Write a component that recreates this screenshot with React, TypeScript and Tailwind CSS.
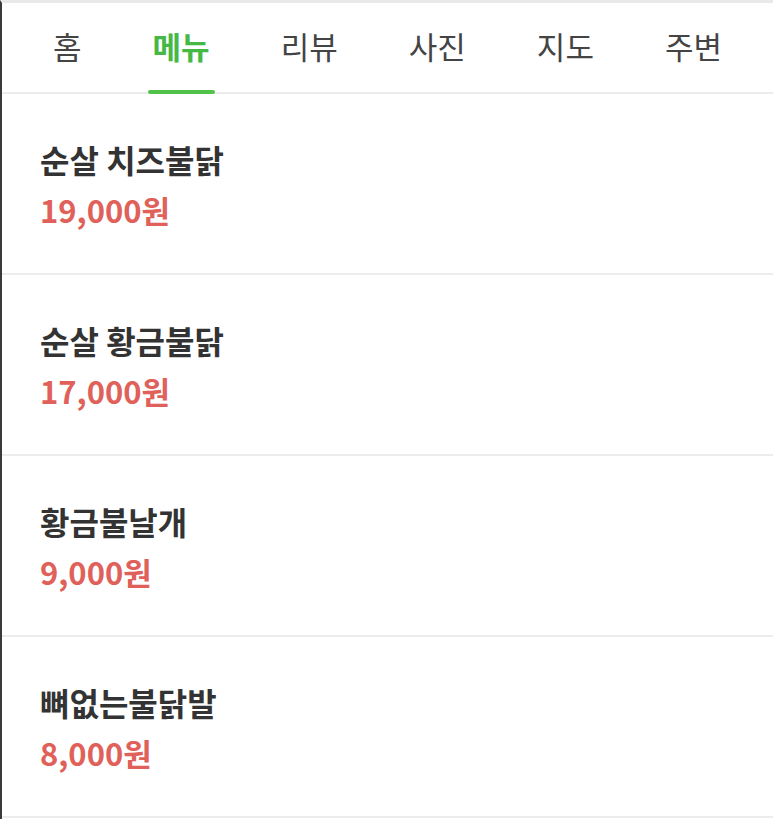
import { useState } from 'react';

const tabs = ['홈', '메뉴', '리뷰', '사진', '지도', '주변'];

const menu = [
  { name: '순살 치즈불닭', price: '19,000원' },
  { name: '순살 황금불닭', price: '17,000원' },
  { name: '황금불날개', price: '9,000원' },
  { name: '뼈없는불닭발', price: '8,000원' },
];

export default function App() {
  const [active, setActive] = useState(1);

  return (
    <div
      className="min-h-screen w-full border-l-2 border-t-[3px] border-l-[#3a3a3a] border-t-[#e9e9ec] bg-white"
      style={{ fontFamily: '"Noto Sans CJK KR", "Noto Sans", sans-serif' }}
    >
      <nav className="flex h-[91px] items-stretch justify-between border-b-2 border-[#ececec] px-[46px]">
        {tabs.map((tab, i) => (
          <button
            key={tab}
            onClick={() => setActive(i)}
            className={`relative flex items-center px-[5px] pb-[2px] text-[31px] ${
              i === active ? 'font-bold text-[#45b845]' : 'font-normal text-[#444]'
            }`}
          >
            {tab}
            {i === active && (
              <span className="absolute -bottom-[2px] left-0 right-0 h-[4px] rounded-full bg-[#52c34a]" />
            )}
          </button>
        ))}
      </nav>

      <ul>
        {menu.map(item => (
          <li key={item.name} className="flex h-[181px] flex-col border-b-2 border-[#ececec] pl-[38px] pt-[45px]">
            <p className="text-[32px] font-bold leading-[40px] text-[#333]">{item.name}</p>
            <p className="mt-[12px] text-[31px] font-bold leading-[38px] text-[#e0605a]">{item.price}</p>
          </li>
        ))}
      </ul>
    </div>
  );
}
